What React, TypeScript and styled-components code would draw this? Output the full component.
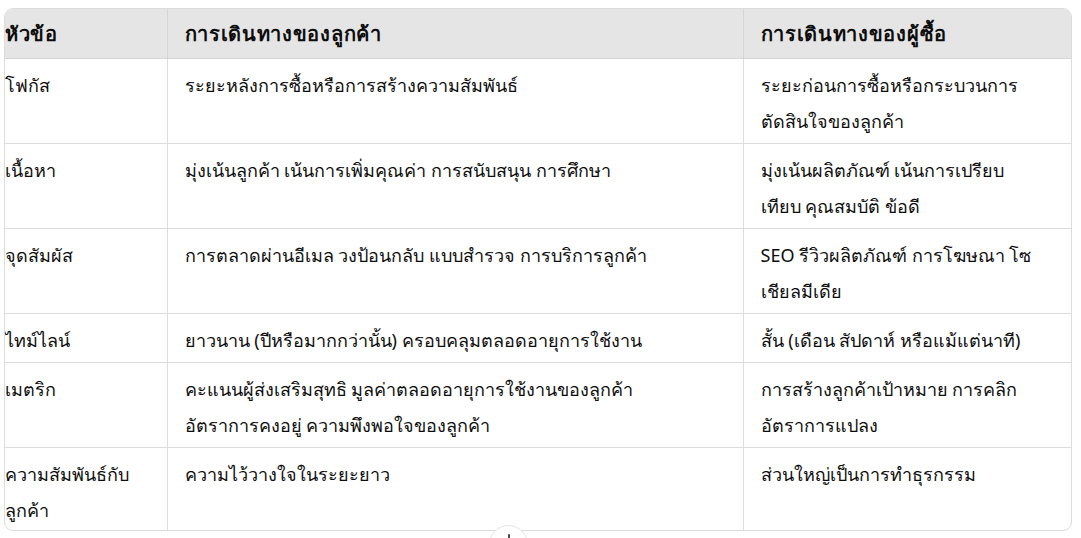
import React from "react";
import styled, { createGlobalStyle } from "styled-components";

const Global = createGlobalStyle`
  html, body { margin: 0; padding: 0; background: #ffffff; }
  body { font-family: "Noto Sans", "DejaVu Sans", sans-serif; color: #0d0d0d; }
`;

const Page = styled.div`
  position: relative;
  min-height: 538px;
  padding: 8px 9px 0 4px;
  box-sizing: border-box;
`;

const Frame = styled.div`
  border: 1px solid #dcdcdc;
  border-radius: 9px;
  overflow: hidden;
`;

const Table = styled.table`
  width: 100%;
  border-collapse: collapse;
  table-layout: fixed;
  font-size: 18px;
  line-height: 36px;
`;

const Th = styled.th<{ $first?: boolean }>`
  background: #e5e5e5;
  font-weight: 700;
  font-size: 20px;
  letter-spacing: 0.7px;
  text-align: left;
  vertical-align: top;
  padding: 7px 16px 6px ${(p) => (p.$first ? "0" : "17px")};
  border-left: ${(p) => (p.$first ? "none" : "1px solid #d6d6d6")};
  border-bottom: 1px solid #d6d6d6;
  white-space: nowrap;
`;

const Td = styled.td<{ $first?: boolean; $last?: boolean }>`
  text-align: left;
  vertical-align: top;
  padding: 8px 16px ${(p) => (p.$last ? "2px" : "4px")} ${(p) => (p.$first ? "0" : "17px")};
  border-left: ${(p) => (p.$first ? "none" : "1px solid #dcdcdc")};
  border-bottom: ${(p) => (p.$last ? "none" : "1px solid #dcdcdc")};
`;

const Line = styled.span`
  display: block;
  white-space: nowrap;
`;

const ScrollButton = styled.button`
  position: absolute;
  left: 489px;
  top: 525px;
  width: 39px;
  height: 39px;
  border-radius: 50%;
  border: 1px solid #e3e3e3;
  background: #ffffff;
  display: flex;
  align-items: flex-start;
  justify-content: center;
  padding: 5px 0 0;
  color: #0d0d0d;
  z-index: 2;
`;

type Cell = string[];

const rows: [Cell, Cell, Cell][] = [
  [["โฟกัส"], ["ระยะหลังการซื้อหรือการสร้างความสัมพันธ์"], ["ระยะก่อนการซื้อหรือกระบวนการ", "ตัดสินใจของลูกค้า"]],
  [["เนื้อหา"], ["มุ่งเน้นลูกค้า เน้นการเพิ่มคุณค่า การสนับสนุน การศึกษา"], ["มุ่งเน้นผลิตภัณฑ์ เน้นการเปรียบ", "เทียบ คุณสมบัติ ข้อดี"]],
  [["จุดสัมผัส"], ["การตลาดผ่านอีเมล วงป้อนกลับ แบบสำรวจ การบริการลูกค้า"], ["SEO รีวิวผลิตภัณฑ์ การโฆษณา โซ", "เชียลมีเดีย"]],
  [["ไทม์ไลน์"], ["ยาวนาน (ปีหรือมากกว่านั้น) ครอบคลุมตลอดอายุการใช้งาน"], ["สั้น (เดือน สัปดาห์ หรือแม้แต่นาที)"]],
  [["เมตริก"], ["คะแนนผู้ส่งเสริมสุทธิ มูลค่าตลอดอายุการใช้งานของลูกค้า", "อัตราการคงอยู่ ความพึงพอใจของลูกค้า"], ["การสร้างลูกค้าเป้าหมาย การคลิก", "อัตราการแปลง"]],
  [["ความสัมพันธ์กับ", "ลูกค้า"], ["ความไว้วางใจในระยะยาว"], ["ส่วนใหญ่เป็นการทำธุรกรรม"]],
];

const CellText = ({ lines }: { lines: Cell }) => (
  <>
    {lines.map((l, i) => (
      <Line key={i}>{l}</Line>
    ))}
  </>
);

export default function App() {
  return (
    <>
      <Global />
      <Page>
        <Frame>
          <Table>
            <colgroup>
              <col style={{ width: 162 }} />
              <col style={{ width: 576 }} />
              <col />
            </colgroup>
            <thead>
              <tr>
                <Th $first>หัวข้อ</Th>
                <Th>การเดินทางของลูกค้า</Th>
                <Th>การเดินทางของผู้ซื้อ</Th>
              </tr>
            </thead>
            <tbody>
              {rows.map((r, i) => {
                const last = i === rows.length - 1;
                return (
                  <tr key={i}>
                    <Td $first $last={last}><CellText lines={r[0]} /></Td>
                    <Td $last={last}><CellText lines={r[1]} /></Td>
                    <Td $last={last}><CellText lines={r[2]} /></Td>
                  </tr>
                );
              })}
            </tbody>
          </Table>
        </Frame>
        <ScrollButton aria-label="เลื่อนลง">
          <svg width="18" height="18" viewBox="0 0 24 24" fill="none" stroke="currentColor" strokeWidth="2" strokeLinecap="round" strokeLinejoin="round">
            <path d="M12 5v14" />
            <path d="M19 12l-7 7-7-7" />
          </svg>
        </ScrollButton>
      </Page>
    </>
  );
}
